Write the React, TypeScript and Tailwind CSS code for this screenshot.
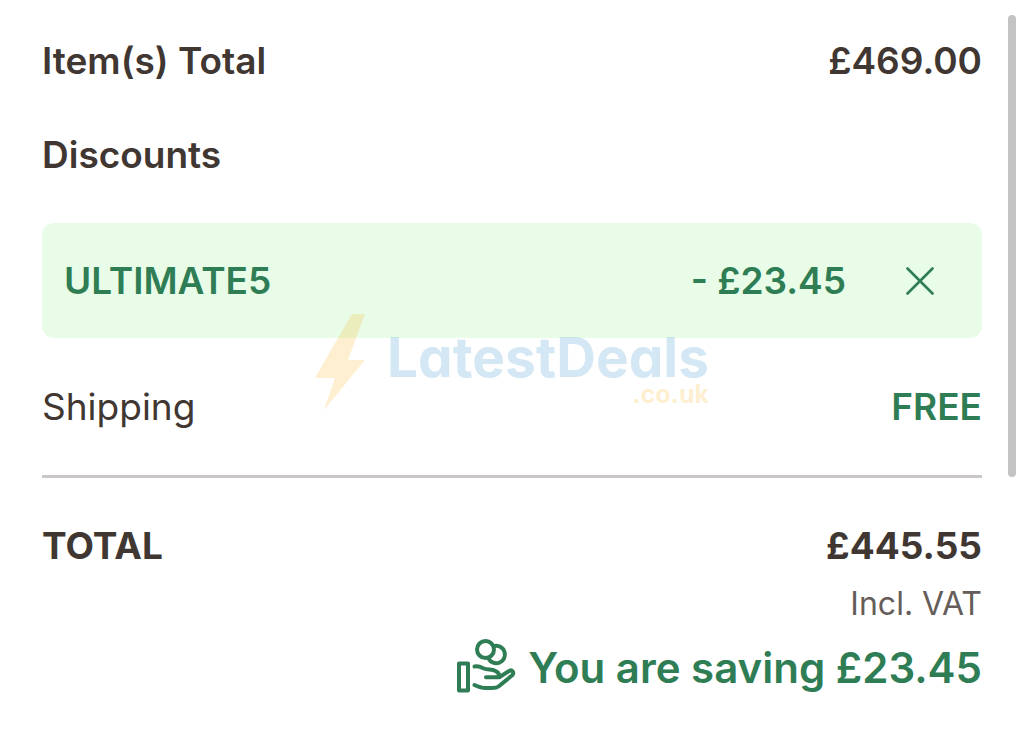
import type { ReactNode } from 'react';

function Row({ label, value, className }: { label: string; value?: ReactNode; className: string }) {
  return (
    <div className={`flex items-center justify-between text-[37px] leading-[48px] ${className}`}>
      <dt>{label}</dt>
      {value && <dd>{value}</dd>}
    </div>
  );
}

function CloseIcon() {
  return (
    <svg className="size-7" viewBox="0 0 28 28" fill="none" stroke="currentColor" strokeWidth="2.6" strokeLinecap="round" aria-hidden="true">
      <path d="M1.500 1.500L26.500 26.500M26.500 1.500L1.500 26.500" />
    </svg>
  );
}

function SavingIcon() {
  return (
    <svg className="h-[60px] w-[60px] shrink-0" viewBox="0 -2 60 60" fill="none" stroke="currentColor" strokeWidth="4" strokeLinecap="round" strokeLinejoin="round" aria-hidden="true">
      <rect x="3" y="23.500" width="9" height="27" strokeLinejoin="round" />
      <circle cx="29.500" cy="9.500" r="8.500" />
      <path d="M38.500 6A8.700 8.700 0 1 1 32.500 18.500" />
      <path d="M18.500 26.500C22.500 25.700 25 27 28 28.500C31 29.800 34 29.300 37 30C41.500 31.200 43.500 33.500 43.500 37.300H30" />
      <path d="M44 36.800L53.500 30.700C56 29.500 58.500 32.500 56.500 35L42.500 46.500C40.500 48 38.500 48 36 48H29.500C25.500 48 22.500 46.800 18.500 45" />
    </svg>
  );
}

function Watermark() {
  return (
    <div className="pointer-events-none absolute left-1/2 top-[313px] flex -translate-x-1/2 items-start gap-5 opacity-20" aria-hidden="true">
      <svg className="h-[98px] w-[52px]" viewBox="0 0 52 98" fill="#f9b31c">
        <path d="M37 1H50L33 47H50L9 97L20 65H0Z" />
      </svg>
      <div className="flex flex-col items-end pt-[18px] font-bold [font-feature-settings:'cv11']">
        <span className="text-[55px] leading-[52px] text-[#2e8bc9]">LatestDeals</span>
        <span className="text-[25px] leading-[22px] text-[#f9b31c]">.co.uk</span>
      </div>
    </div>
  );
}

export default function App() {
  return (
    <main className="relative bg-white px-[42px] pb-8 pt-[37px] font-['Inter','Liberation_Sans',sans-serif] text-[#403632]">
      <dl>
        <Row label="Item(s) Total" value="£469.00" className="font-semibold" />
        <Row label="Discounts" className="mt-[46px] font-semibold" />
        <div className="mt-11 flex h-[115px] items-center rounded-xl bg-[#e8fce7] pl-[22px] pr-12 text-[37px] font-semibold leading-[48px] text-[#2f7d55]">
          <dt>ULTIMATE5</dt>
          <dd className="ml-auto flex items-center gap-[60px]">
            <span>- £23.45</span>
            <button type="button" aria-label="Remove discount ULTIMATE5">
              <CloseIcon />
            </button>
          </dd>
        </div>
        <Row
          label="Shipping"
          value={<span className="font-semibold text-[#2f7d55]">FREE</span>}
          className="mt-[45px]"
        />
      </dl>
      <hr className="mt-11 border-t-[3px] border-[#cbc6c7]" />
      <dl className="mt-11">
        <Row label="TOTAL" value="£445.55" className="font-bold" />
      </dl>
      <p className="mt-[14px] text-right text-[32px] leading-10 text-[#655d59]">Incl. VAT</p>
      <p className="mt-[14px] flex items-center justify-end gap-3 text-[42px] font-semibold leading-[60px] text-[#2f7d55]">
        <SavingIcon />
        <span>You are saving £23.45</span>
      </p>
      <Watermark />
      <div className="absolute right-2 top-[15px] h-[462px] w-2 rounded-full bg-[#c3c3c3]" aria-hidden="true" />
    </main>
  );
}
